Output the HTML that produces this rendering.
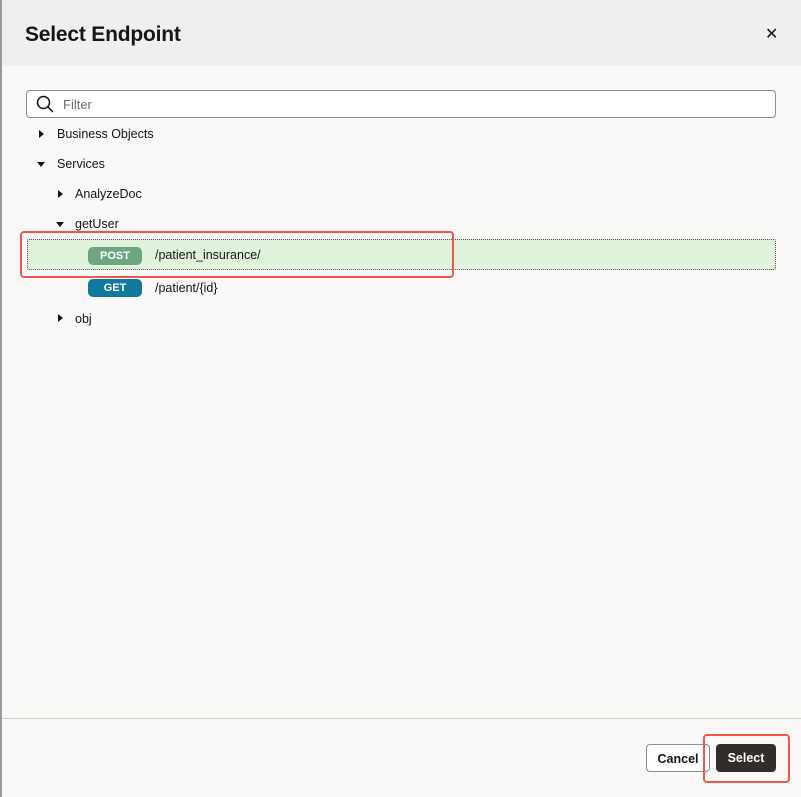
<!DOCTYPE html>
<html><head><style>
*{margin:0;padding:0;box-sizing:border-box}
body{width:801px;height:797px;background:#fbf9f8;font-family:"Liberation Sans",sans-serif;position:relative;overflow:hidden;color:#161513}
.lb{position:absolute;left:0;top:0;width:2px;height:797px;background:#9a9a9a}
.hdr{position:absolute;left:2px;top:0;width:799px;height:66px;background:#f1efed}
.t{position:absolute;left:25px;top:23px;font-size:21px;font-weight:bold;letter-spacing:-0.2px}
.x{position:absolute;left:765px;top:24px;font-size:16px}
.flt{position:absolute;left:26px;top:90px;width:750px;height:28px;border:1px solid #8f8c88;border-radius:4px;background:#fff}
.flt span{position:absolute;left:36px;top:6px;font-size:13px;color:#6f6c69}
.r{position:absolute;font-size:12.5px}
.tri{position:absolute;width:0;height:0}
.rt{border-top:4px solid transparent;border-bottom:4px solid transparent;border-left:5px solid #161513}
.dn{border-left:4px solid transparent;border-right:4px solid transparent;border-top:5px solid #161513}
.sel{position:absolute;left:27px;top:239px;width:749px;height:31px;background:#e1f3dd;border:1px dotted #555;border-radius:2px}
.badge{position:absolute;left:88px;width:54px;height:18px;border-radius:5px;color:#fff;font-size:11px;font-weight:bold;text-align:center;line-height:18px}
.red{position:absolute;border:2px solid #f0574a;border-radius:4px}
.fl{position:absolute;left:2px;top:718px;width:799px;height:1px;background:#cfcbc7}
.btn{position:absolute;top:744px;height:28px;border-radius:4px;font-size:12.5px;font-weight:bold;text-align:center;line-height:28px}
</style></head><body>
<div class="lb"></div>
<div class="hdr"></div>
<div class="t">Select Endpoint</div>
<div class="x">✕</div>
<div class="flt"><svg style="position:absolute;left:9px;top:4px" width="18" height="18" viewBox="0 0 18 18"><circle cx="7.5" cy="7.5" r="6" fill="none" stroke="#161513" stroke-width="1.5"/><line x1="12" y1="12" x2="17" y2="17" stroke="#161513" stroke-width="1.5"/></svg><span>Filter</span></div>
<div class="tri rt" style="left:39px;top:130px"></div><div class="r" style="left:57px;top:127px">Business Objects</div>
<div class="tri dn" style="left:37px;top:162px"></div><div class="r" style="left:57px;top:157px">Services</div>
<div class="tri rt" style="left:58px;top:190px"></div><div class="r" style="left:75px;top:187px">AnalyzeDoc</div>
<div class="tri dn" style="left:56px;top:222px"></div><div class="r" style="left:75px;top:217px">getUser</div>
<div class="sel"></div>
<div class="badge" style="top:247px;background:#6ea582">POST</div>
<div class="r" style="left:155px;top:248px">/patient_insurance/</div>
<div class="badge" style="top:279px;background:#0f7a9b">GET</div>
<div class="r" style="left:155px;top:281px">/patient/{id}</div>
<div class="tri rt" style="left:58px;top:314px"></div><div class="r" style="left:75px;top:312px">obj</div>
<div class="red" style="left:20px;top:231px;width:434px;height:47px"></div>
<div class="fl"></div>
<div class="btn" style="left:646px;width:64px;border:1px solid #8f8c88;background:#fff">Cancel</div>
<div class="btn" style="left:716px;width:60px;background:#312d2a;color:#fff">Select</div>
<div class="red" style="left:703px;top:734px;width:87px;height:49px"></div>
</body></html>
